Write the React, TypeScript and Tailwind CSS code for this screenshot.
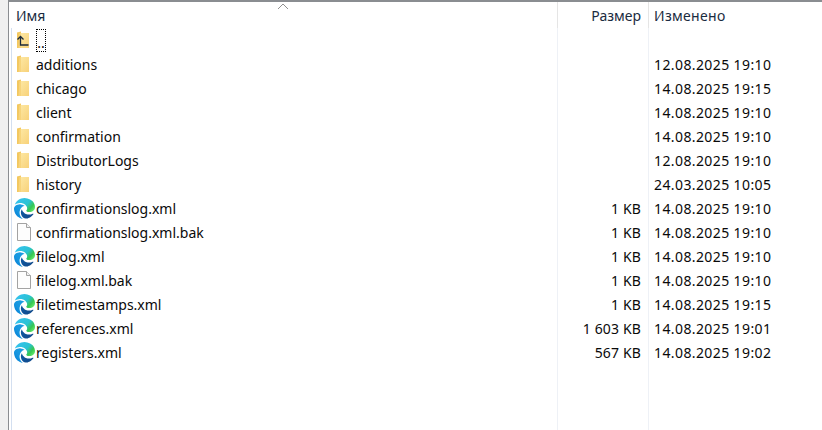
import { Fragment } from 'react';

type Row = { name: string; kind: 'up' | 'folder' | 'edge' | 'file'; size?: string; date?: string };

const rows: Row[] = [
  { name: '..', kind: 'up' },
  { name: 'additions', kind: 'folder', date: '12.08.2025 19:10' },
  { name: 'chicago', kind: 'folder', date: '14.08.2025 19:15' },
  { name: 'client', kind: 'folder', date: '14.08.2025 19:10' },
  { name: 'confirmation', kind: 'folder', date: '14.08.2025 19:10' },
  { name: 'DistributorLogs', kind: 'folder', date: '12.08.2025 19:10' },
  { name: 'history', kind: 'folder', date: '24.03.2025 10:05' },
  { name: 'confirmationslog.xml', kind: 'edge', size: '1 KB', date: '14.08.2025 19:10' },
  { name: 'confirmationslog.xml.bak', kind: 'file', size: '1 KB', date: '14.08.2025 19:10' },
  { name: 'filelog.xml', kind: 'edge', size: '1 KB', date: '14.08.2025 19:10' },
  { name: 'filelog.xml.bak', kind: 'file', size: '1 KB', date: '14.08.2025 19:10' },
  { name: 'filetimestamps.xml', kind: 'edge', size: '1 KB', date: '14.08.2025 19:15' },
  { name: 'references.xml', kind: 'edge', size: '1 603 KB', date: '14.08.2025 19:01' },
  { name: 'registers.xml', kind: 'edge', size: '567 KB', date: '14.08.2025 19:02' },
];

function FolderIcon({ up }: { up?: boolean }) {
  return (
    <svg width="14" height="18" viewBox="0 0 14 18" className="shrink-0">
      <defs>
        <linearGradient id="folderBody" x1="0" y1="0" x2="1" y2="1">
          <stop offset="0" stopColor="#fde9a6" />
          <stop offset="1" stopColor="#f8d27a" />
        </linearGradient>
      </defs>
      <path d="M0 1.5 L4 0.5 L4 17 L0 17 Z" fill="#f3c860" />
      <path d="M3 2 H12 V17 H2 Z" fill="url(#folderBody)" />
      <path d="M2.5 2 L4 2 L4 17 L1.5 17 Z" fill="#f7d47c" />
      {up && <path d="M0.5 8.5 L3.5 5.5 L6.5 8.5 M3.5 6 V14 H11.5" fill="none" stroke="#1c2a3a" strokeWidth="1.3" />}
    </svg>
  );
}

function EdgeIcon() {
  return (
    <svg width="21" height="21" viewBox="0 0 24 24" className="shrink-0">
      <defs>
        <linearGradient id="edgeWave" x1="0" y1="0" x2="1" y2="0.6">
          <stop offset="0" stopColor="#0c59a4" />
          <stop offset="1" stopColor="#114a8b" />
        </linearGradient>
        <linearGradient id="edgeLeft" x1="0.9" y1="0.2" x2="0.2" y2="0.9">
          <stop offset="0" stopColor="#1b9de2" />
          <stop offset="0.6" stopColor="#1595df" />
          <stop offset="1" stopColor="#0680d7" />
        </linearGradient>
        <linearGradient id="edgeTop" x1="0" y1="0.2" x2="1" y2="0.8">
          <stop offset="0" stopColor="#35c1f1" />
          <stop offset="0.55" stopColor="#2bc3d2" />
          <stop offset="0.8" stopColor="#36c752" />
          <stop offset="1" stopColor="#66eb6e" />
        </linearGradient>
      </defs>
      <path
        fill="url(#edgeWave)"
        d="M21.86 17.86q.14 0 .25.12.1.13.1.25t-.11.33l-.32.46-.43.53-.44.5q-.21.25-.38.42l-.22.23q-.58.53-1.34 1.04-.76.51-1.6.91-.86.4-1.74.64t-1.67.24q-.9 0-1.69-.28-.8-.28-1.48-.78-.68-.5-1.22-1.17-.53-.66-.92-1.44-.38-.77-.58-1.6-.2-.83-.2-1.67 0-1 .32-1.96.33-.97.87-1.8.14.95.55 1.77.41.82 1.02 1.5.6.68 1.38 1.21.78.54 1.64.9.86.36 1.77.56.92.2 1.8.2 1.12 0 2.18-.24 1.06-.23 2.06-.72l.2-.1.2-.05z"
      />
      <path
        fill="url(#edgeLeft)"
        d="M6.36 16.59q0 1.1.27 2.15.27 1.06.78 2.03.51.96 1.24 1.77.74.82 1.66 1.4-1.47-.2-2.8-.74-1.33-.55-2.48-1.37-1.15-.83-2.08-1.9-.92-1.07-1.58-2.33T.36 14.94Q0 13.54 0 12.06q0-.81.32-1.49.31-.68.83-1.23.53-.55 1.2-.96.66-.4 1.35-.66.74-.27 1.5-.39.78-.12 1.55-.12.7 0 1.42.1.72.12 1.4.35.68.23 1.32.57.63.35 1.16.83-.35 0-.7.07-.33.07-.65.23v-.02q-.63.28-1.2.74-.57.46-1.05 1.04-.48.58-.87 1.26-.38.67-.65 1.39-.27.71-.42 1.44-.15.72-.15 1.38z"
      />
      <path
        fill="url(#edgeTop)"
        d="M11.96.06q1.7 0 3.33.39 1.63.38 3.07 1.15 1.43.77 2.62 1.93 1.18 1.16 1.98 2.7.49.94.76 1.96.28 1 .28 2.08 0 .89-.23 1.7-.24.8-.69 1.48-.45.68-1.1 1.22-.64.53-1.45.88-.54.24-1.11.36-.58.13-1.16.13-.42 0-.97-.03-.54-.03-1.1-.12-.55-.09-1.05-.28-.5-.19-.84-.5-.12-.09-.23-.24-.1-.16-.1-.33 0-.15.16-.35.16-.2.35-.5.2-.28.36-.68.16-.4.16-.95 0-1.06-.4-1.96-.4-.91-1.06-1.64-.66-.74-1.52-1.28-.86-.55-1.79-.89-.84-.3-1.72-.44-.87-.14-1.76-.14-1.55 0-3.06.45T.94 7.55q.71-1.74 1.81-3.13 1.1-1.38 2.52-2.35Q6.68 1.1 8.37.58q1.7-.52 3.58-.52Z"
      />
    </svg>
  );
}

function FileIcon() {
  return (
    <svg width="14" height="18" viewBox="0 0 14 18" className="shrink-0">
      <path d="M0.5 0.5 H9.5 L13.5 4.5 V17.5 H0.5 Z" fill="#fdfdfd" stroke="#a3a3a3" />
      <path d="M9.5 0.5 V4.5 H13.5" fill="#f2f2f2" stroke="#a3a3a3" />
    </svg>
  );
}

function RowIcon({ kind }: { kind: Row['kind'] }) {
  if (kind === 'edge') return <EdgeIcon />;
  if (kind === 'file') return <FileIcon />;
  return <FolderIcon up={kind === 'up'} />;
}

export default function App() {
  return (
    <div className="flex h-[430px] w-[822px] overflow-hidden bg-white font-['Noto_Sans','Open_Sans',sans-serif] text-[14px] text-[#0a0a0a]">
      <div className="w-[8px] shrink-0 bg-[#f0f0f0]" />
      <div className="flex min-w-0 flex-1 flex-col">
        <div className="h-[2px] shrink-0 bg-[#8a8d91]" />
        <div className="flex flex-1">
          <div className="w-[1px] shrink-0 bg-[#8a8d91]" />
          <div className="w-[2px] shrink-0" />
          <div className="relative flex-1">
            <svg width="12" height="7" viewBox="0 0 12 7" className="absolute left-[266px] top-[1px]">
              <path d="M1 6 L6 1 L11 6" fill="none" stroke="#909090" />
            </svg>
            <div className="grid grid-cols-[546px_91px_1fr]">
              <div className="flex h-[26px] items-center pl-[5px] text-[#1a2b40]">Имя</div>
              <div className="flex h-[26px] items-center justify-end border-l border-[#e5e5e5] pr-[7px] text-[#1a2b40]">Размер</div>
              <div className="flex h-[26px] items-center border-l border-[#e5e5e5] pl-[5px] tracking-[0.3px] text-[#1a2b40]">Изменено</div>
              {rows.map((row) => (
                <Fragment key={row.name}>
                  <div className="flex h-[24px] items-center border-l border-[#d3dff0]">
                    <div className="flex w-[24px] shrink-0 justify-center">
                      <RowIcon kind={row.kind} />
                    </div>
                    {row.kind === 'up' ? (
                      <span className="flex h-[23px] w-[10px] items-end justify-center border border-dotted border-black leading-[16px]">..</span>
                    ) : (
                      <span>{row.name}</span>
                    )}
                  </div>
                  <div className="flex h-[24px] items-center justify-end border-l border-[#eef1f6] pr-[7px] tracking-[0.15px]">{row.size}</div>
                  <div className="flex h-[24px] items-center border-l border-[#eef1f6] pl-[5px] tracking-[0.4px]">{row.date}</div>
                </Fragment>
              ))}
              <div className="h-[66px] border-l border-[#d3dff0]" />
              <div className="h-[66px] border-l border-[#eef1f6]" />
              <div className="h-[66px] border-l border-[#eef1f6]" />
            </div>
          </div>
        </div>
      </div>
    </div>
  );
}
